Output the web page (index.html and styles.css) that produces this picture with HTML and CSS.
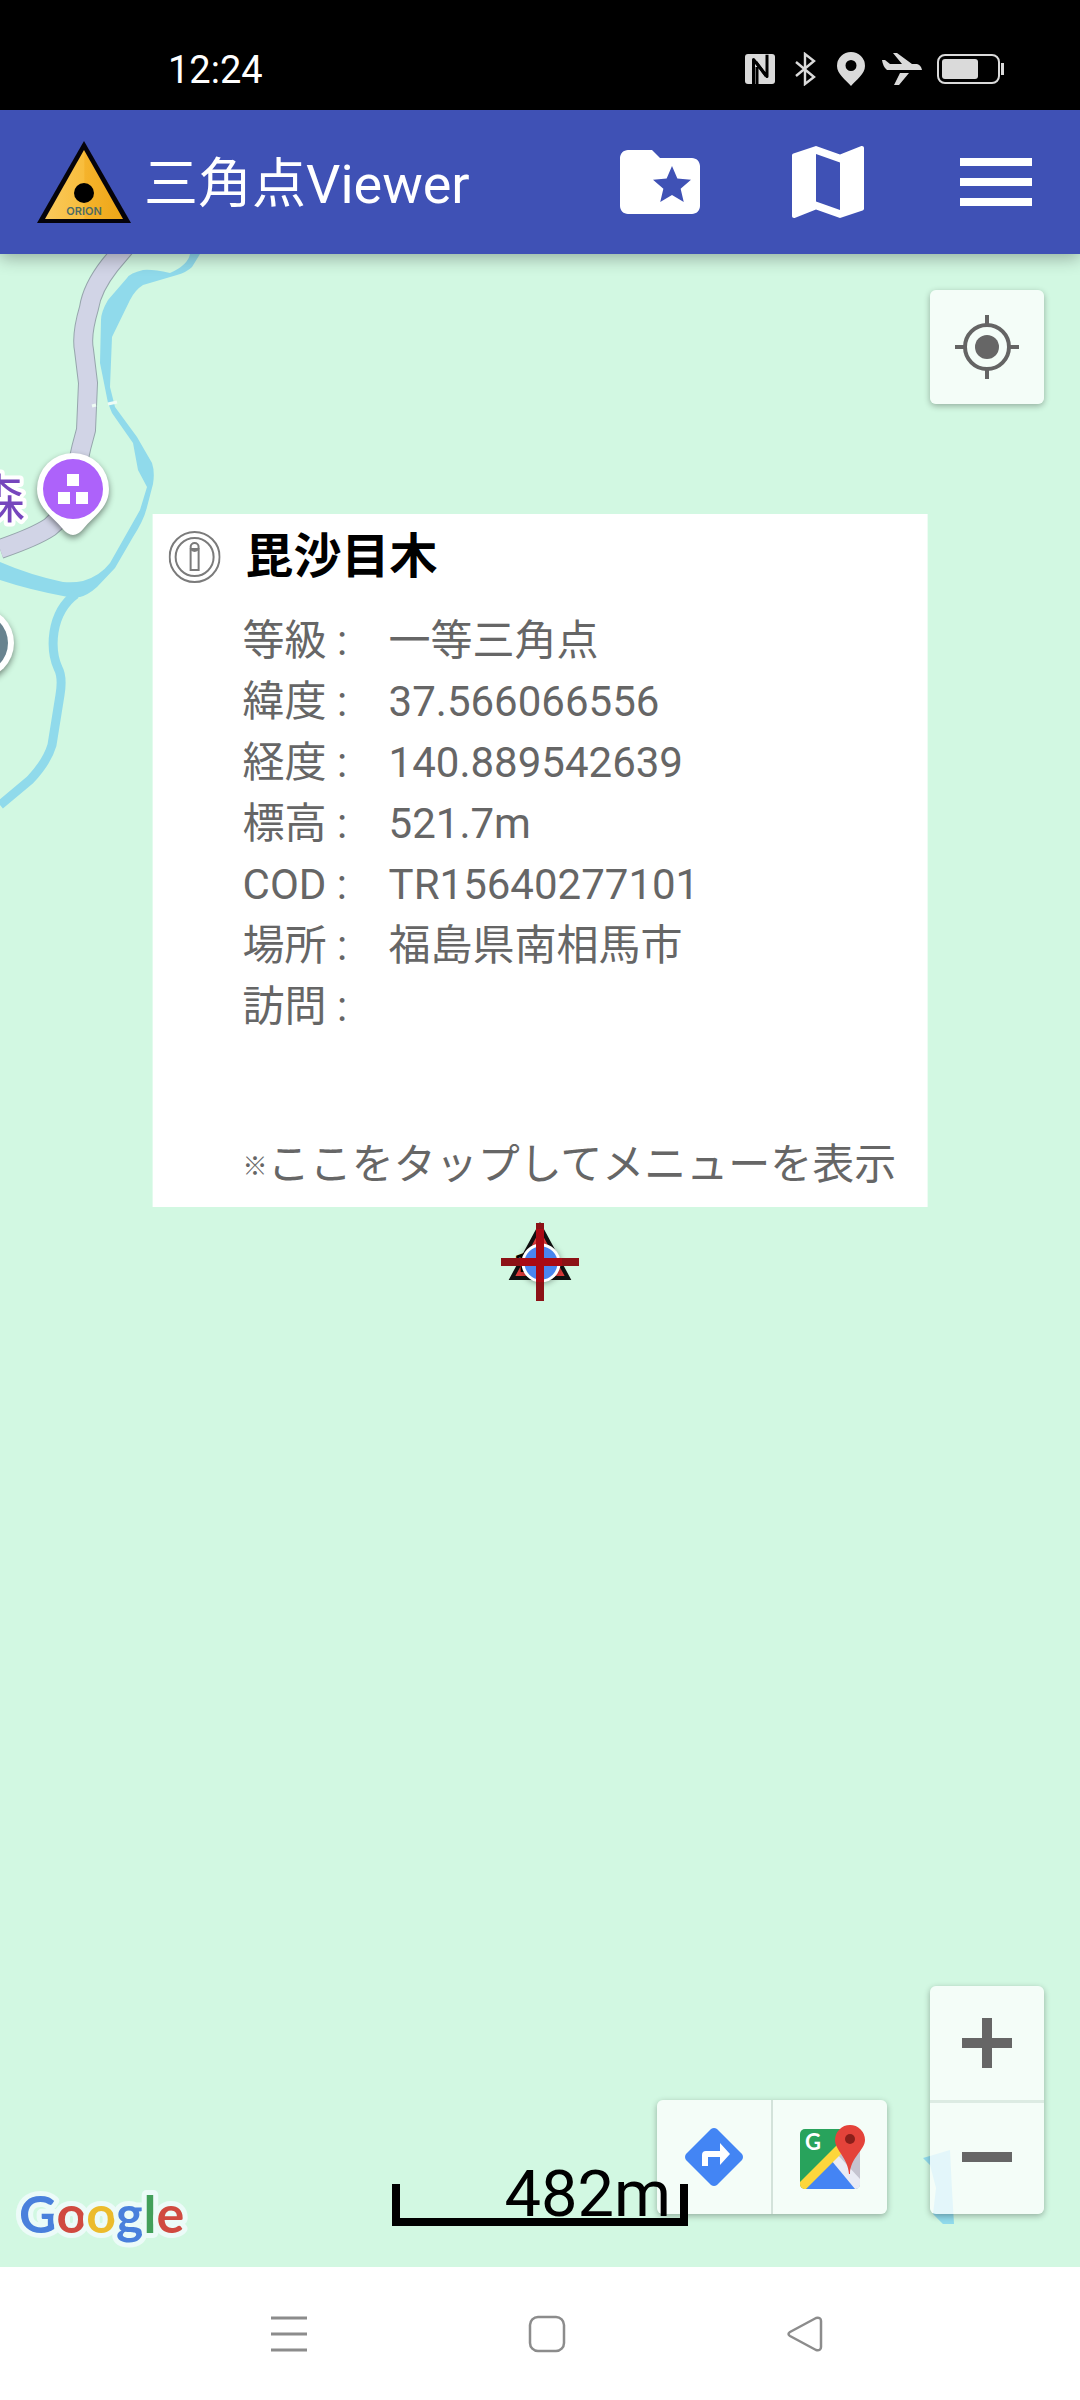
FILE: index.html
```html
<!DOCTYPE html>
<html lang="ja">
<head>
<meta charset="utf-8">
<meta name="viewport" content="width=device-width, initial-scale=1">
<title>三角点Viewer</title>
<link rel="stylesheet" href="styles.css">
</head>
<body>
<div class="status">
  <time class="clock">12:24</time>
  <div class="status-icons">
    <svg width="30" height="30" viewBox="0 0 30 30" aria-hidden="true"><rect width="30" height="30" rx="3" fill="#dadada"/><path d="M8.500 30V5.500l13.500 17V0M12 13v17" fill="none" stroke="#000" stroke-width="3" stroke-linejoin="round" stroke-dasharray="68 100"/><path d="M11 8l10 14" stroke="#000" stroke-width="3"/></svg>
    <svg width="30" height="34" viewBox="0 0 30 34" aria-hidden="true"><path d="M6 10l18 15-9 7V2l9 7L6 24" fill="none" stroke="#dadada" stroke-width="2.400"/></svg>
    <svg width="32" height="34" viewBox="0 0 32 34" aria-hidden="true"><path d="M16 0a14 14 0 0 0-14 14c0 8 9 14 14 20 5-6 14-12 14-20A14 14 0 0 0 16 0zm0 8a5.500 5.500 0 1 1 0 11 5.500 5.500 0 0 1 0-11z" fill="#dadada"/></svg>
    <svg width="40" height="34" viewBox="0 0 40 34" aria-hidden="true"><path d="M0 8h3l5 4h12L11 1h4l15 11h5q4 1 5 6H5Q1 15 0 8zM18 21h9L17 33h-5z" fill="#dadada"/></svg>
    <svg width="67" height="30" viewBox="0 0 67 30" aria-hidden="true"><rect x="1" y="1" width="61" height="28" rx="7" fill="none" stroke="#dadada" stroke-width="2"/><rect x="5" y="5" width="36" height="20" rx="3" fill="#dadada"/><path d="M64 9h3v12h-3z" fill="#dadada"/></svg>
  </div>
</div>

<header class="appbar">
  <svg class="logo" viewBox="0 0 96 84" role="img" aria-label="ORION">
    <defs><linearGradient id="gold"><stop offset="0" stop-color="#f9c95c"/><stop offset=".5" stop-color="#f8bd3c"/><stop offset=".51" stop-color="#f5b32c"/><stop offset="1" stop-color="#eda617"/></linearGradient></defs>
    <path d="M48 1L95 83H1z" fill="#05030a"/>
    <path d="M48 10L87 79H9z" fill="url(#gold)"/>
    <circle cx="48" cy="53" r="10" fill="#000"/>
    <text class="logo-text" x="48" y="75" text-anchor="middle">ORION</text>
  </svg>
  <h1 class="app-title">三角点Viewer</h1>
  <button class="app-action" aria-label="お気に入り"><svg width="96" height="96" viewBox="0 0 24 24" fill="#fff"><path d="M20 6h-8l-2-2H4c-1.100 0-2 .9-2 2v12c0 1.100.9 2 2 2h16c1.100 0 2-.9 2-2V8c0-1.100-.9-2-2-2zm-2.060 11L15 15.280 12.060 17l.78-3.330-2.590-2.240 3.410-.29L15 8l1.340 3.140 3.410.29-2.590 2.240.78 3.330z"/></svg></button>
  <button class="app-action" aria-label="地図"><svg width="96" height="96" viewBox="0 0 24 24" fill="#fff"><path d="M20.500 3l-.16.030L15 5.100 9 3 3.360 4.900c-.21.070-.36.250-.36.480V20.500c0 .28.220.5.500.5l.16-.03L9 18.900l6 2.100 5.640-1.900c.21-.07.36-.25.36-.48V3.500c0-.28-.22-.5-.5-.5zM15 19l-6-2.110V5l6 2.110V19z"/></svg></button>
  <button class="app-action" aria-label="メニュー"><svg width="96" height="96" viewBox="0 0 24 24" fill="#fff"><path d="M3 18h18v-2H3v2zm0-5h18v-2H3v2zm0-7v2h18V6H3z"/></svg></button>
</header>

<main class="map">
  <svg class="terrain" width="240" height="600" viewBox="0 254 240 600" aria-hidden="true">
    <path d="M190 254Q188 265 170 273Q152 269 143 270Q130 273 127 278L108 300Q101 312 101 320L100 363L108 403L112 413L133 443L138 470L147 487L140 510L110 563Q100 576 83 581Q74 583 63 582Q30 575 0 562V580Q30 590 68 597H80Q88 595 97 587L115 568L133 537Q144 520 147 507L153 484Q155 472 152 463L137 437L115 407L110 387L112 337L130 300Q135 290 143 285L177 275Q187 272 192 267L200 254z" fill="#90daeb"/>
    <path d="M76 594Q58 607 54 632Q51 652 58 668Q63 677 60 695L52 745Q47 762 30 780L0 805" fill="none" stroke="#90daeb" stroke-width="9"/>
    <g fill="none" stroke-linejoin="round">
      <path d="M126 246L110 265Q92 288 89 308Q81 335 84 350L88 383L86 430Q76 465 74 490Q64 516 50 527Q35 537 0 549" stroke="#96a5ac" stroke-width="20"/>
      <path d="M126 246L110 265Q92 288 89 308Q81 335 84 350L88 383L86 430Q76 465 74 490Q64 516 50 527Q35 537 0 549" stroke="#d1d4e6" stroke-width="18"/>
      <path d="M92 406l4-1M108 404l9-2" stroke="#effcf5" stroke-width="3"/>
    </g>
    <text class="place" x="25" y="518" text-anchor="end">森</text>
    <g class="pin">
      <path d="M73 453a36 36 0 0 0-36 36c0 18 14 26 25 39q11 14 22 0c11-13 25-21 25-39a36 36 0 0 0-36-36z" fill="#fff"/>
      <circle cx="73" cy="489" r="30" fill="#ad62fa"/>
      <path d="M67 474h12v12H67zM58 492h12v12H58zM76 492h12v12H76z" fill="#fff"/>
    </g>
    <g class="pin">
      <circle cx="-22" cy="643" r="36" fill="#fff"/>
      <circle cx="-22" cy="643" r="30" fill="#68838f"/>
    </g>
  </svg>
  <svg class="pond" width="32" height="76" viewBox="0 0 32 76" aria-hidden="true"><path d="M0 8L27 0l2 40 2 34H20L10 64l3-26L7 15z" fill="#90daeb"/></svg>

  <article class="info">
    <header class="info-head">
      <svg width="52" height="52" viewBox="0 0 52 52" fill="none" stroke="#7b7b7b" stroke-width="2" aria-hidden="true"><circle cx="26" cy="26" r="25"/><circle cx="26" cy="26" r="19"/><rect x="22" y="18" width="8" height="21"/><circle cx="26" cy="16" r="4"/></svg>
      <h2 class="info-title">毘沙目木</h2>
    </header>
    <dl class="facts">
      <dt>等級 :</dt><dd>一等三角点</dd>
      <dt>緯度 :</dt><dd>37.566066556</dd>
      <dt>経度 :</dt><dd>140.889542639</dd>
      <dt>標高 :</dt><dd>521.7m</dd>
      <dt>COD :</dt><dd>TR15640277101</dd>
      <dt>場所 :</dt><dd>福島県南相馬市</dd>
      <dt>訪問 :</dt><dd></dd>
    </dl>
    <p class="note"><span class="note-mark">※</span>ここをタップしてメニューを表示</p>
  </article>

  <svg class="target" width="80" height="80" viewBox="0 0 80 80" aria-hidden="true">
    <path d="M40 4L68 56H12z" fill="#e03a3a" stroke="#111" stroke-width="4"/>
    <text class="grade" x="14" y="50">1</text>
    <circle class="here" cx="41" cy="41" r="18" fill="#4a86f0" stroke="#fff" stroke-width="3"/>
    <path d="M1 36h35V1h8v35h35v8H44v35h-8V44H1z" fill="#a90a14"/>
    <path d="M1 36h19v8H1zM62 36h17v8H62zM36 1h8v6h-8zM36 60h8v19h-8z" fill="#8c1216"/>
  </svg>

  <div class="panel locate">
    <button class="tool" aria-label="現在地"><svg width="64" height="64" viewBox="0 0 64 64" fill="none" stroke="#646464" stroke-width="4"><circle cx="32" cy="32" r="22"/><circle cx="32" cy="32" r="12" fill="#666" stroke="none"/><path d="M32 0v10M32 54v10M0 32h10M54 32h10"/></svg></button>
  </div>

  <div class="panel zoom">
    <button class="tool" aria-label="拡大"><svg width="50" height="50" viewBox="0 0 50 50" fill="#666"><path d="M20 0h10v20h20v10H30v20H20V30H0V20h20z"/></svg></button>
    <button class="tool" aria-label="縮小"><svg width="50" height="50" viewBox="0 0 50 50" fill="#666"><path d="M0 18h50v10H0z"/></svg></button>
  </div>

  <div class="panel routes">
    <button class="tool" aria-label="経路"><svg width="60" height="60" viewBox="0 0 60 60"><path d="M27 2q3-2 6 0l25 25q2 3 0 6L33 58q-3 2-6 0L2 33q-2-3 0-6z" fill="#4385f4"/><path d="M18 39V28q0-4 4-4h14v-8l10 11-10 11v-8H24v9z" fill="#fff"/></svg></button>
    <button class="tool" aria-label="Google マップ"><svg width="72" height="66" viewBox="-5 0 72 66">
      <rect x="1" y="5" width="60" height="60" rx="5" fill="#28a35c"/>
      <path d="M61 14v46L32 36 46 22z" fill="#c5c4d0"/>
      <path d="M33 35l27 25q0 5-5 5H7z" fill="#4484f4"/>
      <path d="M32 36l6-6 23 25v6q0 4-5 4z" fill="#e9ebf4"/>
      <path d="M1 58L40 19l6 7L7 65H5q-4-1-4-5z" fill="#fdd63b"/>
      <text class="maps-g" x="6" y="26">G</text>
      <path d="M51 1a15 15 0 0 0-15 15c0 10 13 18 14 34h1c0-16 15-24 15-34A15 15 0 0 0 51 1z" fill="#e4433a"/>
      <circle cx="51" cy="15" r="5" fill="#8a1f1a"/>
    </svg></button>
  </div>

  <div class="scale">482m</div>

  <svg class="google" width="184" height="76" viewBox="0 0 184 76" role="img" aria-label="Google"><text x="9" y="54"><tspan fill="#4a80dc">G</tspan><tspan fill="#d04a40">o</tspan><tspan fill="#ecbb2c">o</tspan><tspan fill="#4a80dc">g</tspan><tspan fill="#43a05a">l</tspan><tspan fill="#d04a40">e</tspan></text></svg>
</main>

<nav class="sysnav">
  <button class="sys" aria-label="履歴"><svg width="38" height="38" viewBox="0 0 38 38" stroke="#8c8c8c" stroke-width="3"><path d="M1 3h36M1 19h36M1 35h36"/></svg></button>
  <button class="sys" aria-label="ホーム"><svg width="38" height="38" viewBox="0 0 38 38" fill="none" stroke="#8c8c8c" stroke-width="2.500"><rect x="2" y="2" width="34" height="34" rx="8"/></svg></button>
  <button class="sys" aria-label="戻る"><svg width="38" height="38" viewBox="0 0 38 38" fill="none" stroke="#8c8c8c" stroke-width="2.500" stroke-linejoin="round"><path d="M4 17L30 3q5-1 5 3v26q0 4-5 3L4 21q-3-2 0-4z"/></svg></button>
</nav>
</body>
</html>
```
FILE: styles.css
```css
* { box-sizing: border-box; }

body {
  margin: 0;
  min-height: 100vh;
  display: flex;
  flex-direction: column;
  font-family: Roboto, "Noto Sans CJK JP", sans-serif;
  background: #fff;
}

h1, h2, p, dl, dd { margin: 0; font-weight: 400; }

button {
  display: flex;
  align-items: center;
  justify-content: center;
  padding: 0;
  border: 0;
  background: none;
  cursor: pointer;
}

.status {
  display: flex;
  align-items: center;
  justify-content: space-between;
  height: 110px;
  padding: 28px 76px 0 168px;
  background: #000;
  color: #fff;
}
.clock { padding-top: 2px; font-size: 38px; line-height: 44px; }
.status-icons { display: flex; align-items: center; gap: 15px; }

.appbar {
  position: relative;
  z-index: 1;
  display: flex;
  align-items: center;
  height: 144px;
  padding-left: 36px;
  background: #3f51b5;
  color: #fff;
  box-shadow: 0 4px 16px rgba(0, 0, 0, .3);
}
.logo { width: 96px; height: 84px; margin-right: 12px; }
.logo-text { font: 600 11px Inter, sans-serif; fill: #4c6a63; }
.app-title { flex: 1; padding-top: 6px; font-size: 54px; line-height: 64px; }
.app-action { width: 168px; height: 144px; }

.map {
  position: relative;
  flex: 1;
  min-height: 1400px;
  overflow: hidden;
  background: #d2f8e2;
}
.terrain { position: absolute; top: 0; left: 0; }
.pond { position: absolute; right: 125px; bottom: 41px; }
.place {
  font: 400 52px "Noto Sans CJK JP", sans-serif;
  fill: #7646bd;
  stroke: #fff;
  stroke-width: 8px;
  stroke-linejoin: round;
  paint-order: stroke;
}
.pin { filter: drop-shadow(0 3px 3px rgba(0, 0, 0, .45)); }

.info {
  position: absolute;
  left: 50%;
  bottom: calc(50% + 54px);
  transform: translateX(-50%);
  padding: 8px 31px 12px 16px;
  background: #fff;
  color: #666;
  font-size: 42px;
  line-height: 61px;
}
.info-head { display: flex; align-items: center; gap: 25px; margin-bottom: 18px; }
.info-title { color: #000; font-size: 48px; line-height: 70px; font-weight: 700; }
.facts {
  display: grid;
  grid-template-columns: 146px 1fr;
  grid-auto-rows: 61px;
  margin: 0 0 97px 74px;
}
.note { margin-left: 74px; white-space: nowrap; }
.note-mark { font-size: 25px; line-height: 25px; font-weight: 700; vertical-align: 4px; }

.target {
  position: absolute;
  left: 50%;
  top: 50%;
  margin: -39px 0 0 -40px;
}
.grade { font: 700 26px Roboto, sans-serif; }
.here { filter: drop-shadow(0 1px 3px rgba(0, 0, 0, .4)); }

.panel {
  position: absolute;
  display: flex;
  border-radius: 6px;
  background: rgba(255, 255, 255, .75);
  box-shadow: 0 2px 6px rgba(0, 0, 0, .3);
}
.tool { width: 114px; height: 114px; }
.locate { top: 36px; right: 36px; }
.zoom { right: 36px; bottom: 53px; flex-direction: column; }
.zoom .tool + .tool { border-top: 3px solid #dcebe3; }
.routes { right: 193px; bottom: 53px; }
.routes .tool + .tool { width: 116px; border-left: 2px solid #d3e2da; }
.maps-g { font: 700 22px Lato, sans-serif; fill: #fff; }

.scale {
  position: absolute;
  left: 392px;
  bottom: 41px;
  width: 296px;
  height: 42px;
  padding-right: 9px;
  border: 8px solid #000;
  border-top: 0;
  color: #000;
  font-size: 65px;
  line-height: 20px;
  text-align: right;
}

.google { position: absolute; left: 10px; bottom: 12px; }
.google text {
  font: 700 52px Lato, sans-serif;
  stroke: #ecfbf8;
  stroke-width: 10px;
  stroke-linejoin: round;
  paint-order: stroke;
}

.sysnav {
  display: flex;
  justify-content: center;
  height: 133px;
  padding-left: 14px;
  background: #fff;
}
.sys { width: 258px; }
```
